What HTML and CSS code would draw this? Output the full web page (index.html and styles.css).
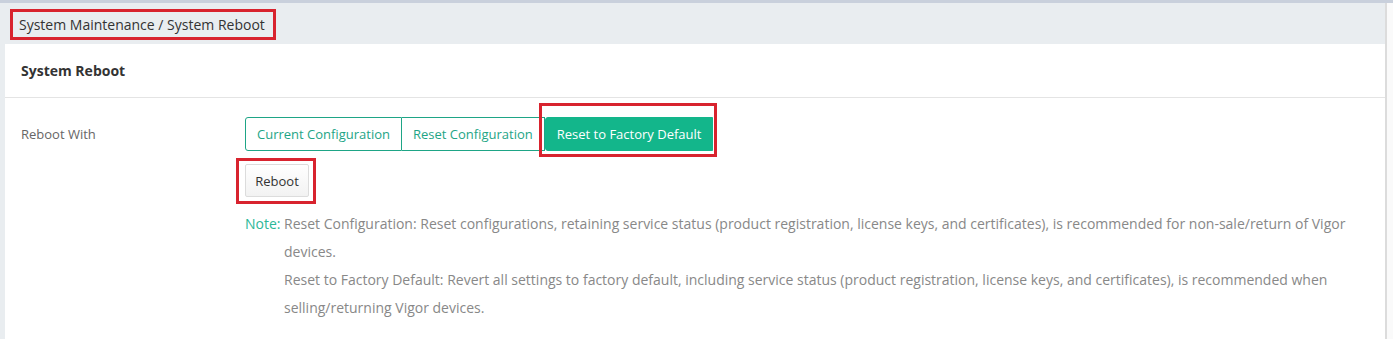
FILE: index.html
```html
<!DOCTYPE html>
<html lang="en">
<head>
    <meta charset="UTF-8">
    <title>System Reboot</title>
    <link rel="stylesheet" href="styles.css">
</head>
<body>

<div class="layout">
    <div class="main">
        <div class="topbar">
            <span class="breadcrumb marked">System Maintenance / System Reboot</span>
        </div>
        <div class="card">
            <div class="card-header">System Reboot</div>
            <div class="card-body">
                <div class="form-row">
                    <div class="label">Reboot With</div>
                    <div class="field">
                        <div class="btn-group">
                            <button class="opt">Current Configuration</button>
                            <button class="opt">Reset Configuration</button>
                            <span class="mark-factory">
                                <button class="opt active">Reset to Factory Default</button>
                            </span>
                        </div>
                        <span class="mark-reboot">
                            <button class="btn-reboot">Reboot</button>
                        </span>
                        <div class="note">
                            <span class="note-title">Note:</span>
                            <div class="note-text">
                                <p>Reset Configuration: Reset configurations, retaining service status (product registration, license keys, and certificates), is recommended for non-sale/return of Vigor devices.</p>
                                <p>Reset to Factory Default: Revert all settings to factory default, including service status (product registration, license keys, and certificates), is recommended when selling/returning Vigor devices.</p>
                            </div>
                        </div>
                    </div>
                </div>
            </div>
        </div>
    </div>
    <div class="track"></div>
</div>

</body>
</html>
```

FILE: styles.css
```css
body {
    margin: 0;
    font-family: "Open Sans", Arial, sans-serif;
    color: #333;
    background-color: #fff;
}
.layout {
    display: flex;
    height: 339px;
    border-top: 3px solid #c9d0dc;
    box-sizing: border-box;
}
.main {
    flex: 1;
    background-color: #e9edf0;
    padding-left: 5px;
    overflow: hidden;
}
.track {
    width: 6px;
    border-left: 2px solid #dcdcdc;
    background-color: #fafafa;
}
.topbar {
    height: 41px;
    padding: 6px 0 0 5px;
    box-sizing: border-box;
}
.breadcrumb {
    display: inline-block;
    font-size: 14px;
    line-height: 25px;
    padding: 0 8px 0 6px;
    color: #333;
}
.marked {
    border: 3px solid #d8232e;
}
.card {
    background-color: #fff;
    height: 100%;
}
.card-header {
    font-size: 14px;
    font-weight: bold;
    line-height: 20px;
    padding: 17px 16px 16px;
    border-bottom: 1px solid #e4e4e4;
}
.card-body {
    padding: 19px 16px 0;
}
.form-row {
    display: flex;
}
.label {
    width: 224px;
    flex-shrink: 0;
    font-size: 13px;
    color: #666;
    line-height: 34px;
}
.field {
    flex: 1;
    padding-right: 4px;
}
.btn-group {
    display: flex;
    align-items: flex-start;
}
.opt {
    font-family: "Open Sans", Arial, sans-serif;
    font-size: 13px;
    height: 34px;
    padding: 0 11px;
    background-color: #fff;
    color: #1ea586;
    border: 1px solid #1ea586;
    margin: 0;
    cursor: pointer;
}
.opt + .opt {
    border-left: none;
}
.btn-group .opt:first-child {
    border-radius: 3px 0 0 3px;
}
.opt.active {
    background-color: #13b68b;
    border-color: #13b68b;
    color: #fff;
    border-radius: 0 3px 3px 0;
}
.mark-factory,
.mark-reboot {
    position: relative;
    display: inline-block;
}
.mark-factory::after {
    content: "";
    position: absolute;
    left: -6px;
    right: -4px;
    top: -14px;
    bottom: -6px;
    border: 3px solid #d8232e;
}
.mark-reboot {
    margin-top: 13px;
}
.mark-reboot::after {
    content: "";
    position: absolute;
    left: -9px;
    right: -7px;
    top: -6px;
    bottom: -7px;
    border: 3px solid #d8232e;
}
.btn-reboot {
    display: block;
    font-family: "Open Sans", Arial, sans-serif;
    font-size: 13px;
    color: #333;
    width: 64px;
    height: 33px;
    margin: 0;
    background: linear-gradient(#fff, #f2f2f2);
    border: 1px solid #dcdcdc;
    border-radius: 2px;
}
.note {
    display: flex;
    margin-top: 13px;
    font-size: 14px;
    line-height: 28px;
    color: #888;
}
.note-title {
    color: #2cb898;
    width: 39px;
    flex-shrink: 0;
}
.note-text p {
    margin: 0;
}
```
